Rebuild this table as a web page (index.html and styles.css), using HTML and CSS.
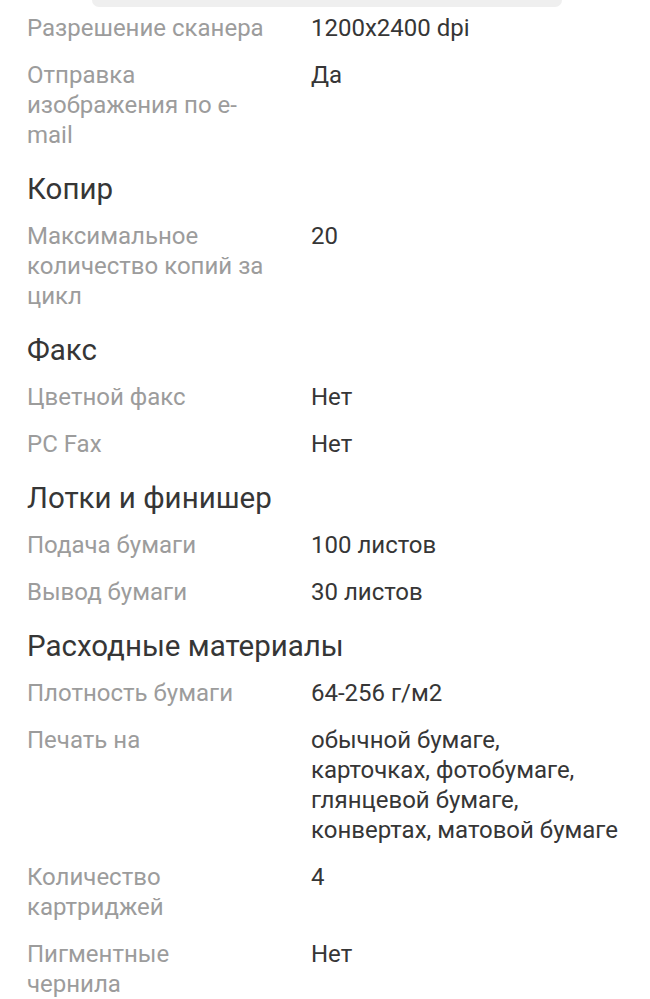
FILE: index.html
```html
<!DOCTYPE html>
<html lang="ru">
<head>
<meta charset="utf-8">
<link rel="stylesheet" href="styles.css">
</head>
<body>
<div class="page">
  <div class="topbar"></div>
  <div class="specs">
    <div class="row"><div class="label">Разрешение сканера</div><div class="value">1200x2400 dpi</div></div>
    <div class="row"><div class="label">Отправка изображения по e-mail</div><div class="value">Да</div></div>
    <h2 class="heading">Копир</h2>
    <div class="row"><div class="label">Максимальное количество копий за цикл</div><div class="value">20</div></div>
    <h2 class="heading">Факс</h2>
    <div class="row"><div class="label">Цветной факс</div><div class="value">Нет</div></div>
    <div class="row"><div class="label">PC Fax</div><div class="value">Нет</div></div>
    <h2 class="heading">Лотки и финишер</h2>
    <div class="row"><div class="label">Подача бумаги</div><div class="value">100 листов</div></div>
    <div class="row"><div class="label">Вывод бумаги</div><div class="value">30 листов</div></div>
    <h2 class="heading">Расходные материалы</h2>
    <div class="row"><div class="label">Плотность бумаги</div><div class="value">64-256 г/м2</div></div>
    <div class="row"><div class="label">Печать на</div><div class="value">обычной бумаге,<br>карточках, фотобумаге,<br>глянцевой бумаге,<br>конвертах, матовой бумаге</div></div>
    <div class="row"><div class="label">Количество картриджей</div><div class="value">4</div></div>
    <div class="row"><div class="label">Пигментные чернила</div><div class="value">Нет</div></div>
  </div>
</div>
</body>
</html>
```
FILE: styles.css
```css
html, body {
  margin: 0;
  padding: 0;
  background: #ffffff;
}
body {
  font-family: Roboto, "Noto Sans", sans-serif;
  overflow: hidden;
  height: 999px;
}
.page {
  width: 650px;
}
.topbar {
  margin-left: 92px;
  width: 470px;
  height: 7px;
  background: #efefef;
  border-radius: 0 0 12px 12px;
}
.specs {
  padding: 6px 0 0 27px;
}
.row {
  display: flex;
  margin-bottom: 17px;
  font-size: 24px;
  line-height: 30px;
}
.label {
  width: 284px;
  flex: none;
  padding-right: 46px;
  box-sizing: border-box;
  color: #9c9c9c;
}
.value {
  color: #363636;
}
.heading {
  margin: 0 0 12px 0;
  padding-top: 2px;
  font-size: 29.5px;
  line-height: 40px;
  font-weight: 400;
  color: #363636;
}
```
